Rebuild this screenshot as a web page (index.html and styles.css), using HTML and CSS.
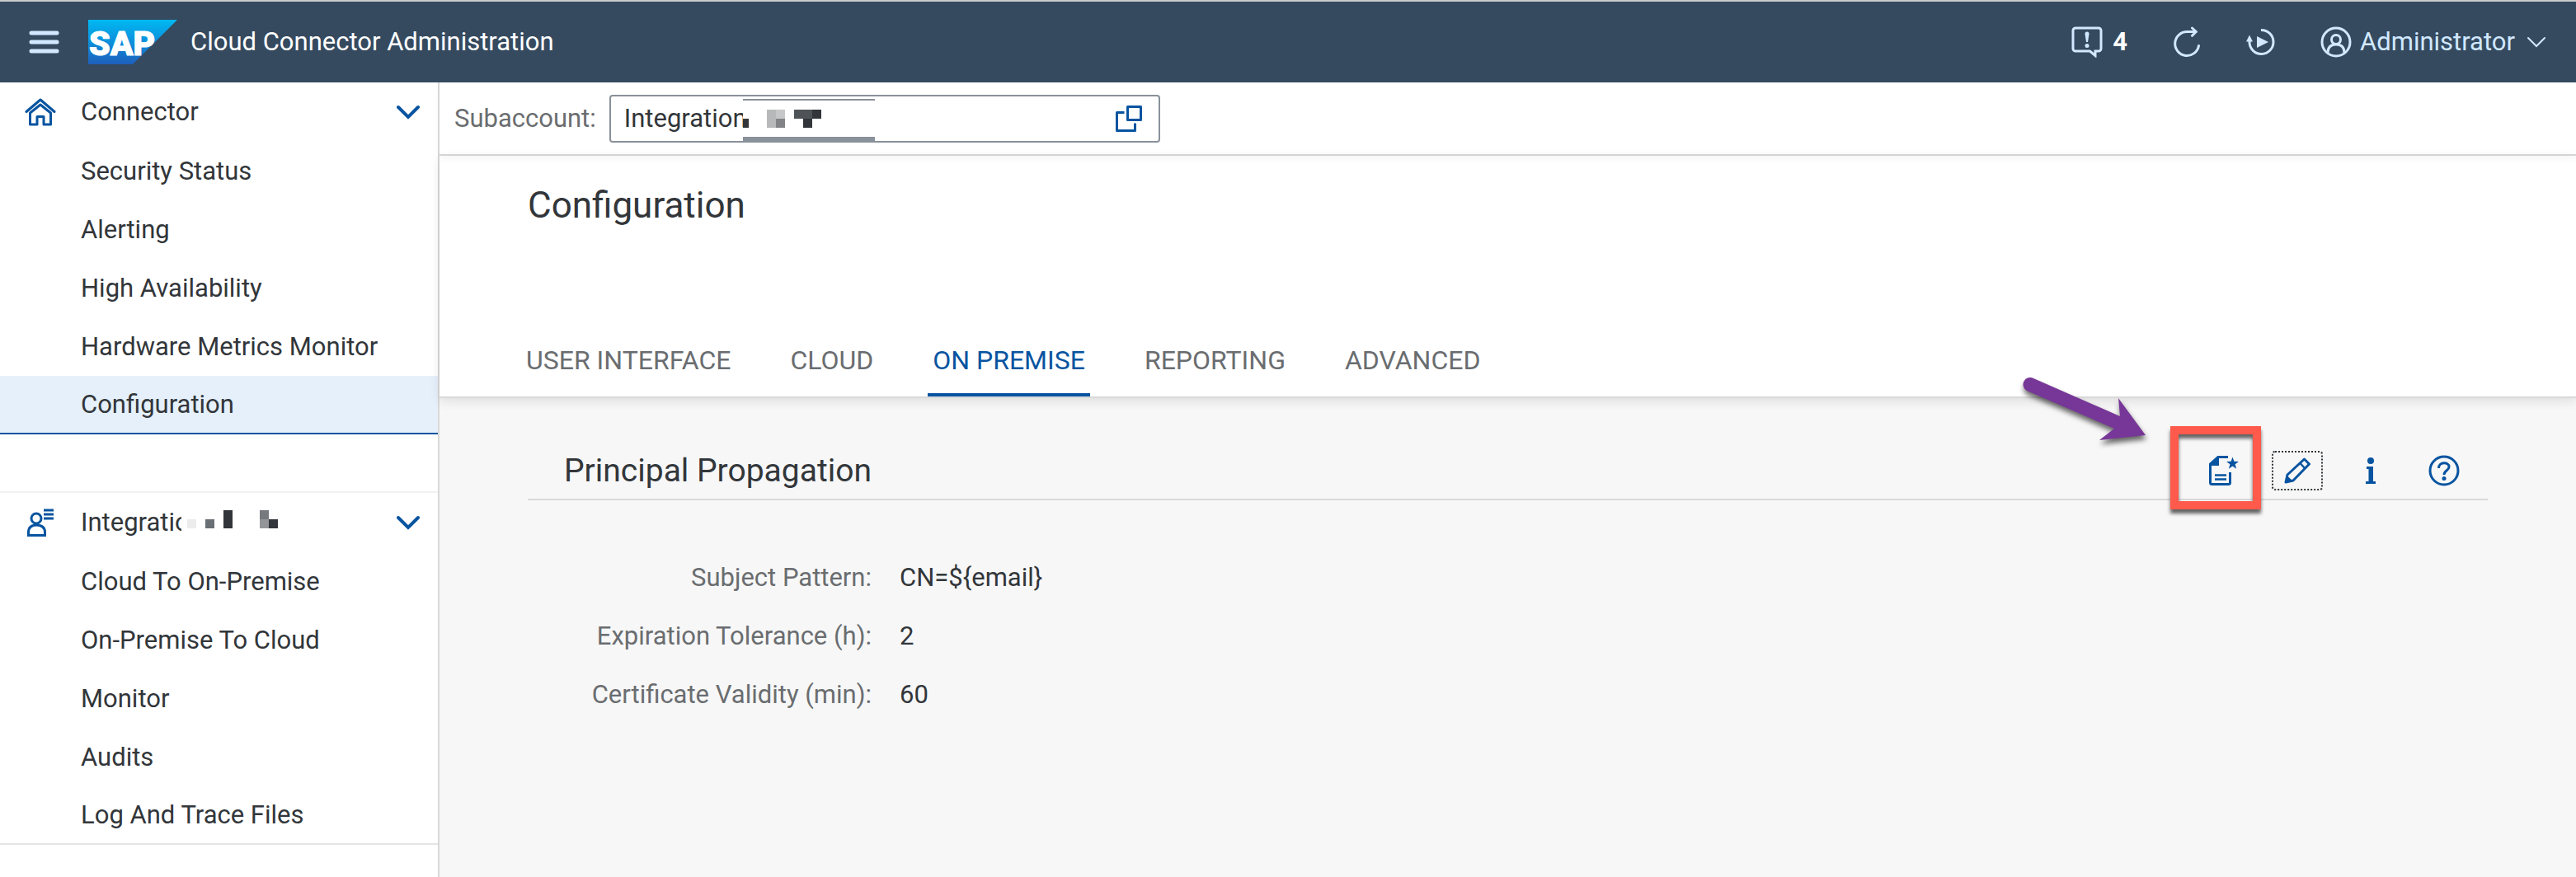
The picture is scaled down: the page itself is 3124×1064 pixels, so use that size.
FILE: index.html
```
<!DOCTYPE html>
<html lang="en">
<head>
<meta charset="utf-8">
<title>Cloud Connector Administration</title>
<link rel="stylesheet" href="styles.css">
</head>
<body>
<header class="shell">
  <button class="icon-btn menu-btn" aria-label="Menu">
    <svg width="38" height="28" viewBox="0 0 38 28" fill="none" stroke="currentColor" stroke-width="5" stroke-linecap="round"><path d="M4 3h31M4 14h31M4 25h31"/></svg>
  </button>
  <svg class="logo" width="108" height="54" viewBox="0 0 108 54" role="img" aria-label="SAP">
    <defs><linearGradient id="sap" x1="0" y1="0" x2="0" y2="1"><stop offset="0" stop-color="#00b8f1"/><stop offset=".5" stop-color="#0d90dc"/><stop offset="1" stop-color="#1e5fbb"/></linearGradient></defs>
    <path d="M0 0h108L54 54H0z" fill="url(#sap)"/>
    <text x="1" y="43" class="logo-text">SAP</text>
  </svg>
  <h1 class="shell-title">Cloud Connector Administration</h1>
  <div class="shell-actions">
    <button class="icon-btn alerts" aria-label="Alerts">
      <svg width="38" height="38" viewBox="0 0 38 38" fill="none" stroke="currentColor" stroke-width="3"><path d="M5 2h28a3 3 0 0 1 3 3v22a3 3 0 0 1-3 3h-4v5.500L22.500 30H5a3 3 0 0 1-3-3V5a3 3 0 0 1 3-3z"/><path d="M16.500 9a2.500 2.500 0 0 1 5 0l-1.500 10h-2z" fill="currentColor" stroke="none"/><circle cx="19" cy="23.500" r="2.500" fill="currentColor" stroke="none"/></svg>
      <span class="count">4</span>
    </button>
    <button class="icon-btn refresh" aria-label="Refresh">
      <svg width="36" height="38" viewBox="0 0 36 38" fill="none" stroke="currentColor" stroke-width="3" stroke-linecap="round" stroke-linejoin="round"><path d="M32.500 23.500A14.500 14.500 0 1 1 18.500 6.500H29"/><path d="M24.500 2l4.800 4.500-4.800 4.800"/></svg>
    </button>
    <button class="icon-btn restart" aria-label="Restart">
      <svg width="36" height="36" viewBox="0 0 36 36" fill="none" stroke="currentColor" stroke-width="3"><path d="M18 3.500A14.500 14.500 0 1 1 4 18v-2"/><path d="M0 17.500l4-8 4 8z" fill="currentColor" stroke="none"/><path d="M13 11l14 7-14 7z" fill="currentColor" stroke="none"/></svg>
    </button>
    <button class="icon-btn user" aria-haspopup="menu">
      <svg width="38" height="38" viewBox="0 0 38 38" fill="none" stroke="currentColor" stroke-width="3"><circle cx="19" cy="19" r="17"/><circle cx="19" cy="16" r="5.500"/><path d="M9 32c0-7 4-10 10-10s10 3 10 10"/></svg>
      <span>Administrator</span>
      <svg class="user-arrow" width="24" height="14" viewBox="0 0 24 14" fill="none" stroke="currentColor" stroke-width="2" stroke-linecap="round"><path d="M2 2l10 10L22 2"/></svg>
    </button>
  </div>
</header>
<div class="app">
  <nav class="side">
    <a href="#" class="item group">
      <svg width="38" height="34" viewBox="0 0 38 34" fill="none" stroke="currentColor" stroke-width="3" stroke-linecap="round" stroke-linejoin="round"><path d="M2 16.500L19 2l17 14.500"/><path d="M6.500 18v14H15V22.500h8V32h8.500V18L19 8z"/></svg>
      <span>Connector</span>
      <svg class="chev" width="28" height="18" viewBox="0 0 28 18" fill="none" stroke="currentColor" stroke-width="4" stroke-linecap="round"><path d="M2 3l12 12L26 3"/></svg>
    </a>
    <a href="#" class="item">Security Status</a>
    <a href="#" class="item">Alerting</a>
    <a href="#" class="item">High Availability</a>
    <a href="#" class="item">Hardware Metrics Monitor</a>
    <a href="#" class="item selected" aria-current="page">Configuration</a>
    <div class="side-gap"></div>
    <a href="#" class="item group">
      <svg width="38" height="34" viewBox="0 0 38 34" fill="none" stroke="currentColor" stroke-width="3"><circle cx="14" cy="12" r="6"/><path d="M4.500 32.500V29c0-6 3-9 9.500-9s10.500 3 10.500 9v3.500z"/><path d="M23 2h12M23 7h12M23 12h12" stroke-width="3"/></svg>
      <span class="masked">Integration
        <svg class="mosaic" width="120" height="40" viewBox="0 0 120 40"><path d="M0 0h120v40H0z" fill="#fff"/><path d="M7 16h11v11H7z" fill="#ececec"/><path d="M29 16h11v11H29z" fill="#6a6f75"/><path d="M51 5h11v22H51z" fill="#32363a"/><path d="M95 5h11v11H95z" fill="#767a7e"/><path d="M95 16h11v11H95z" fill="#939598"/><path d="M106 16h11v11h-11z" fill="#32363a"/></svg>
      </span>
      <svg class="chev" width="28" height="18" viewBox="0 0 28 18" fill="none" stroke="currentColor" stroke-width="4" stroke-linecap="round"><path d="M2 3l12 12L26 3"/></svg>
    </a>
    <a href="#" class="item">Cloud To On-Premise</a>
    <a href="#" class="item">On-Premise To Cloud</a>
    <a href="#" class="item">Monitor</a>
    <a href="#" class="item">Audits</a>
    <a href="#" class="item last">Log And Trace Files</a>
  </nav>
  <main class="main">
    <div class="account-bar">
      <label for="subaccount">Subaccount:</label>
      <div class="field">
        <input id="subaccount" type="text" value="Integration">
        <svg class="field-mask" width="160" height="54" viewBox="0 0 160 54"><path d="M0 5h160v45H0z" fill="#fff"/><path d="M0 3h160v2H0zM0 49h160v5H0z" fill="#89919a"/><path d="M0 27h7v11H0z" fill="#32363a"/><path d="M29 16h11v22H29z" fill="#b7b8ba"/><path d="M40 16h11v11H40z" fill="#c6c7c8"/><path d="M40 27h11v11H40z" fill="#828387"/><path d="M62 16h22v11H62z" fill="#4e5357"/><path d="M84 16h11v11H84zM73 27h11v11H73z" fill="#32363a"/></svg>
        <button class="icon-btn value-help" aria-label="Select subaccount">
          <svg width="32" height="32" viewBox="0 0 32 32" fill="none" stroke="currentColor" stroke-width="3" stroke-linejoin="round"><path d="M14.500 1.500h16v16h-16z"/><path d="M10.500 8.500h-9v22h22v-9"/></svg>
        </button>
      </div>
    </div>
    <section class="page-head">
      <h2>Configuration</h2>
      <div class="tabs" role="tablist">
        <button role="tab" class="tab">USER INTERFACE</button>
        <button role="tab" class="tab">CLOUD</button>
        <button role="tab" class="tab active" aria-selected="true">ON PREMISE</button>
        <button role="tab" class="tab">REPORTING</button>
        <button role="tab" class="tab">ADVANCED</button>
      </div>
    </section>
    <section class="panel">
      <div class="panel-head">
        <h3>Principal Propagation</h3>
        <div class="tools">
          <button class="tool" aria-label="Create certificate">
            <svg width="36" height="36" viewBox="0 0 36 36" fill="none" stroke="currentColor" stroke-width="3"><path d="M23 1.500H11L1.500 10v22.500a2 2 0 0 0 2 2h20a2 2 0 0 0 2-2V20"/><path d="M11 1v10H1.500z" fill="currentColor" stroke-width="2"/><path d="M7 23.500h14M7 28.500h14" stroke-width="2.500"/><path d="M28.500 1.500l1.900 5.200 5.600.2-4.400 3.400 1.500 5.400-4.600-3.100-4.600 3.100 1.500-5.400L21 6.900l5.600-.2z" fill="currentColor" stroke="none"/></svg>
            <svg class="marker" width="110" height="101" viewBox="0 0 110 101"><path d="M5 5h100v91H5z" fill="none" stroke="#ff5a4b" stroke-width="10"/></svg>
            <svg class="arrow" width="160" height="92" viewBox="0 0 160 92"><path d="M13 1L118 47 116 25 149 70 93 76 111 62 5 16A8 8 0 0 1 13 1z" fill="#773798"/></svg>
          </button>
          <button class="tool focused" aria-label="Edit">
            <svg width="32" height="32" viewBox="0 0 32 32" fill="none" stroke="currentColor" stroke-width="3" stroke-linejoin="round"><path d="M2 30l2-9L24.500 2l6 6L11 28z"/><path d="M19.500 7l5.500 6" stroke-width="2.500"/><path d="M1 31l2.500-9 7 6.500z" fill="currentColor" stroke="none"/></svg>
          </button>
          <button class="tool" aria-label="Information">
            <svg width="12" height="32" viewBox="0 0 12 32" fill="currentColor"><circle cx="6" cy="4" r="4"/><path d="M1 11h8v18h3v3H0v-3h3.500V14H1z"/></svg>
          </button>
          <button class="tool" aria-label="Help">
            <svg width="38" height="38" viewBox="0 0 38 38" fill="none" stroke="currentColor" stroke-width="3"><circle cx="19" cy="19" r="17"/><path d="M12.500 16c0-8 12.500-8 12.500-1.500 0 4.500-6 4-6 9.500"/><circle cx="19" cy="28.500" r="2.500" fill="currentColor" stroke="none"/></svg>
          </button>
        </div>
      </div>
      <dl class="props">
        <dt>Subject Pattern:</dt><dd>CN=${email}</dd>
        <dt>Expiration Tolerance (h):</dt><dd>2</dd>
        <dt>Certificate Validity (min):</dt><dd>60</dd>
      </dl>
    </section>
  </main>
</div>
</body>
</html>
```
FILE: styles.css
```
* { box-sizing: border-box; }
body {
  margin: 0;
  min-height: 100vh;
  display: flex;
  flex-direction: column;
  font: 31px/40px Roboto, "Noto Sans", sans-serif;
  color: #32363a;
  background: #fff;
}
button, input { font: inherit; color: inherit; }
button { border: 0; padding: 0; background: none; }
svg { display: block; flex: none; }
h1, h2, h3, dl, dd { margin: 0; font-weight: 400; }

.shell {
  display: flex;
  align-items: center;
  height: 100px;
  padding: 0 36px 0 34px;
  border-top: 2px solid #c8cacb;
  background: #354a5f;
  color: #d1e8ff;
}
.icon-btn { display: flex; align-items: center; }
.menu-btn { margin-right: 35px; }
.logo-text { font: 900 41px Roboto, sans-serif; fill: #fff; stroke: #fff; stroke-width: 1px; }
.shell-title { margin-left: 16px; font-size: 31px; color: #fff; }
.shell-actions { display: flex; align-items: center; margin-left: auto; gap: 54px; }
.alerts { gap: 12px; }
.count { color: #fff; font-weight: 700; }
.user { gap: 10px; }
.user-arrow { margin-left: 4px; }

.app { display: flex; flex: 1; }
.side {
  width: 533px;
  flex: none;
  border-right: 2px solid #d9d9d9;
}
.item {
  display: flex;
  align-items: center;
  height: 71px;
  padding-left: 98px;
  color: inherit;
  text-decoration: none;
}
.group { height: 72px; padding: 0 22px 0 30px; color: #0854a0; }
.group span { margin-left: 30px; color: #32363a; }
.chev { margin-left: auto; }
.selected { background: #e5f0fa; border-bottom: 2px solid #0854a0; }
.side-gap { height: 71px; border-bottom: 2px solid #f2f2f2; }
.masked { position: relative; }
.mosaic { position: absolute; left: 122px; top: 0; }
.last { border-bottom: 2px solid #e4e4e4; }

.main { flex: 1; display: flex; flex-direction: column; min-width: 0; }
.account-bar {
  display: flex;
  align-items: center;
  gap: 16px;
  height: 89px;
  padding-left: 18px;
  border-bottom: 2px solid #d9d9d9;
  box-shadow: 0 4px 8px rgba(0, 0, 0, .04);
  color: #6a6d70;
}
.field {
  position: relative;
  display: flex;
  align-items: center;
  width: 668px;
  height: 58px;
  padding: 0 20px 0 16px;
  border: 2px solid #89919a;
  border-radius: 4px;
}
.field input { flex: 1; min-width: 0; border: 0; padding: 0; outline: 0; background: none; color: #32363a; }
.field-mask { position: absolute; left: 160px; top: 0; }
.value-help { color: #0854a0; }
.page-head {
  position: relative;
  padding: 36px 107px 0;
  border-bottom: 2px solid #d9d9d9;
  box-shadow: 0 4px 12px rgba(0, 0, 0, .1);
}
.page-head h2 { font-size: 44px; line-height: 48px; }
.tabs { display: flex; gap: 60px; margin-top: 112px; margin-left: -8px; }
.tab {
  height: 96px;
  padding: 12px 6px 0;
  font-size: 32px;
  color: #6a6d70;
  border-bottom: 4px solid transparent;
}
.active { color: #0854a0; border-color: #0854a0; }

.panel { flex: 1; padding: 50px 107px; background: #f7f7f7; }
.panel-head {
  display: flex;
  align-items: center;
  justify-content: space-between;
  height: 74px;
  padding: 4px 22px 0 44px;
  border-bottom: 2px solid #d9d9d9;
}
.panel-head h3 { font-size: 39px; line-height: 48px; }
.tools { display: flex; align-items: center; gap: 27px; color: #0854a0; }
.tool { position: relative; display: flex; align-items: center; justify-content: center; width: 62px; height: 48px; }
.focused { border: 2px dotted #32363a; border-radius: 4px; }
.marker { position: absolute; left: -34px; top: -30px; filter: drop-shadow(0 5px 2px rgba(0, 0, 0, .6)); }
.arrow { position: absolute; left: -213px; top: -89px; filter: drop-shadow(1px 5px 3px rgba(0, 0, 0, .6)); }

.props { display: grid; grid-template-columns: 417px 1fr; column-gap: 34px; row-gap: 31px; padding-top: 74px; }
.props dt { text-align: right; color: #6a6d70; }
```
